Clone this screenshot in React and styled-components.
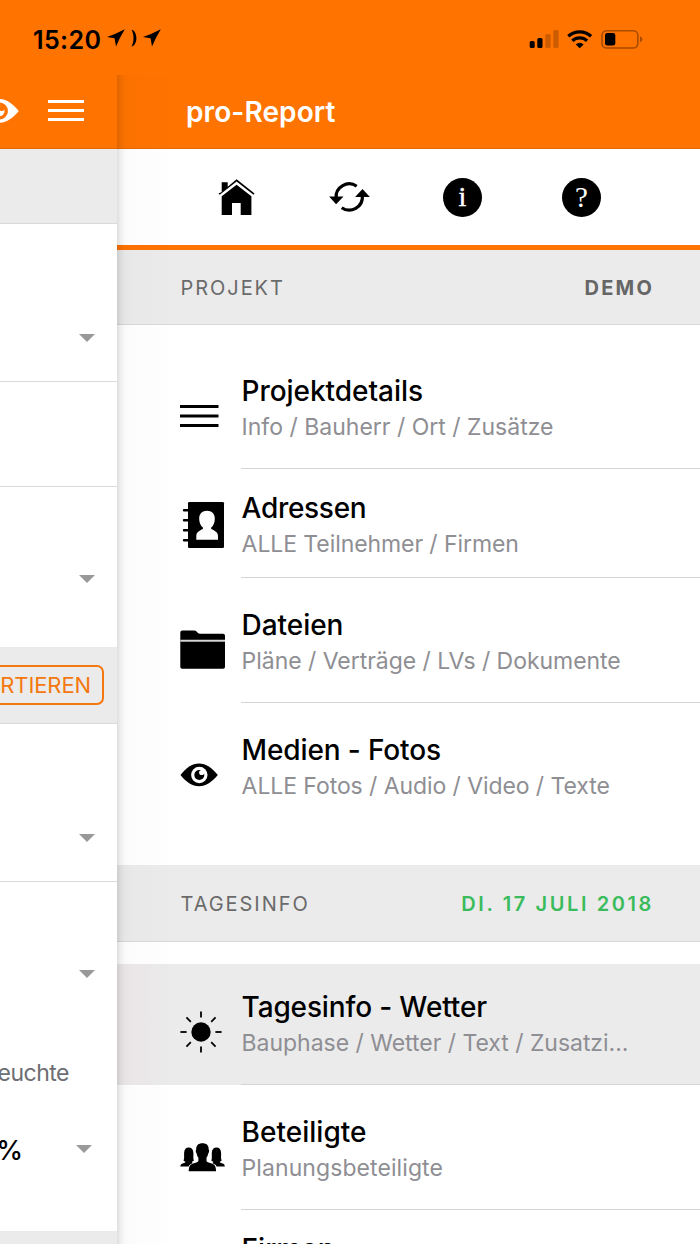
import React from "react";
import styled, { createGlobalStyle } from "styled-components";

const GlobalStyle = createGlobalStyle`
  * {
    box-sizing: border-box;
  }

  body {
    margin: 0;
    background: #fff;
    font-family: Inter, "Liberation Sans", sans-serif;
    -webkit-font-smoothing: antialiased;
  }

  svg {
    display: block;
    flex-shrink: 0;
  }
`;

const Screen = styled.div`
  width: 700px;
  height: 1244px;
  overflow: hidden;
  display: flex;
  flex-direction: column;
  background: #fff;
`;

const StatusBar = styled.header`
  display: flex;
  justify-content: space-between;
  height: 75px;
  padding: 28px 57px 0 33px;
  background: #ff7300;
`;

const StatusLeft = styled.div`
  display: flex;
  align-items: flex-start;
  gap: 6px;
  padding-top: 1px;
`;

const Clock = styled.span`
  font-size: 25px;
  font-weight: 600;
  line-height: 22px;
  letter-spacing: 0.4px;
`;

const Panes = styled.div`
  display: flex;
  flex: 1;
  min-height: 0;
`;

const PagePane = styled.main`
  width: 117px;
  overflow: hidden;
  display: flex;
  flex-direction: column;
`;

const MenuPane = styled.aside`
  position: relative;
  flex: 1;
  min-width: 0;
  overflow: hidden;
  display: flex;
  flex-direction: column;

  /* shadow the page casts on the menu */
  &::before {
    content: "";
    position: absolute;
    top: 0;
    bottom: 0;
    left: 0;
    width: 52px;
    background: linear-gradient(
      to right,
      rgba(0, 0, 0, 0.13) 0,
      rgba(0, 0, 0, 0.06) 4px,
      rgba(0, 0, 0, 0.025) 8px,
      rgba(0, 0, 0, 0.01) 13px,
      rgba(0, 0, 0, 0.005) 50px,
      transparent
    );
    z-index: 1;
  }
`;

const NavBar = styled.div`
  display: flex;
  flex-shrink: 0;
  height: 74px;
  background: #ff7300;
  border-bottom: 1px solid #e56a06;
`;

const PageNav = styled(NavBar)`
  justify-content: flex-end;
  align-items: flex-start;
  gap: 29px;
  padding: 23px 33px 0 0;
`;

const NavBars = styled.span`
  padding-top: 2px;
`;

const MenuNav = styled(NavBar)`
  padding: 20px 0 0 69px;
`;

const NavTitle = styled.h1`
  margin: 0;
  color: #fff;
  font-size: 28px;
  font-weight: 600;
  line-height: 34px;
  letter-spacing: 0.1px;
`;

const GreyBar = styled.div`
  display: flex;
  flex-shrink: 0;
  justify-content: flex-end;
  height: ${(p) => p.$height}px;
  padding: 18px 13px 0 0;
  background: #ebebeb;
  border-bottom: 1px solid #d9d9d9;
`;

const Field = styled.div`
  display: flex;
  flex-direction: column;
  flex-shrink: 0;
  align-items: flex-end;
  height: ${(p) => p.$height}px;
  padding: ${(p) => p.$top || 0}px 22px 0 0;
  border-bottom: ${(p) => (p.$last ? "none" : "1px solid #d9d9d9")};
`;

const Caret = styled.i`
  width: 0;
  height: 0;
  border-left: 8px solid transparent;
  border-right: 8px solid transparent;
  border-top: 8.5px solid #999;
`;

const FieldLabel = styled.span`
  margin: 81px 26px 0 0;
  color: #6d6d72;
  font-size: 23px;
  line-height: 28px;
  letter-spacing: -0.5px;
`;

const ValueRow = styled.div`
  display: flex;
  align-items: center;
  gap: 53px;
  margin: 44px 3px 0 0;
`;

const Value = styled.span`
  padding-top: 4px;
  font-size: 27px;
  font-weight: 500;
  line-height: 32px;
`;

const SortButton = styled.button`
  flex-shrink: 0;
  height: 40px;
  padding: 0 11px 0 30px;
  border: 2px solid #f4780f;
  border-radius: 7px;
  background: none;
  color: #f4780f;
  font-family: inherit;
  font-size: 22px;
  line-height: 36px;
  letter-spacing: -0.1px;
`;

const ToolBar = styled.nav`
  display: flex;
  flex-shrink: 0;
  align-items: flex-start;
  gap: 73px;
  height: 101px;
  padding: 29px 0 0 101px;
  border-bottom: 5px solid #ff7300;
`;

const RoundButton = styled.span`
  display: flex;
  justify-content: center;
  width: 39px;
  height: 39px;
  margin-left: ${(p) => p.$shift || 0}px;
  border-radius: 50%;
  background: #000;
  color: #fff;
  font-family: "Liberation Serif", serif;
  font-size: ${(p) => p.$size}px;
  line-height: 38px;
  -webkit-text-stroke: ${(p) => p.$stroke || 0}px #fff;
`;

const Section = styled.div`
  display: flex;
  flex-shrink: 0;
  justify-content: space-between;
  align-items: center;
  height: ${(p) => p.$height}px;
  padding: 2px 46px 0 63.5px;
  background: #ebebeb;
  border-bottom: 1px solid #d9d9d9;
  color: #6a6a6a;
  font-size: 20px;
  line-height: 24px;
  letter-spacing: 1.95px;
`;

const SectionValue = styled.b`
  color: ${(p) => p.$color || "#666"};
  font-weight: ${(p) => (p.$color ? 600 : 700)};
  letter-spacing: ${(p) => (p.$color ? 2.6 : 2.2)}px;
`;

const List = styled.ul`
  list-style: none;
  margin: 0;
  padding: ${(p) => p.$top || 0}px 0 0;
`;

const Item = styled.li`
  display: flex;
  height: ${(p) => p.$height}px;
  padding-left: 63px;
  background: ${(p) =>
    p.$active
      ? "linear-gradient(to right, #ede9ea 0, #ede9ea 22px, #ebebeb 52px)"
      : "none"};
`;

const ItemIcon = styled.span`
  width: 61px;
  padding-top: ${(p) => p.$top}px;
`;

const ItemText = styled.div`
  flex: 1;
  min-width: 0;
  padding: ${(p) => p.$top}px 60px 0 0.6px;
  border-bottom: ${(p) => (p.$line ? "1px solid #d4d4d6" : "none")};
`;

const ItemTitle = styled.div`
  font-size: 28px;
  font-weight: 500;
  line-height: 34px;
  letter-spacing: ${(p) => p.$spacing || 0}px;
  white-space: nowrap;
`;

const ItemSub = styled.div`
  margin-top: 2px;
  color: #8e8e93;
  font-size: 23px;
  line-height: 34px;
  letter-spacing: ${(p) => p.$spacing || 0}px;
  white-space: nowrap;
`;

function StatusArrow() {
  return (
    <svg width="18" height="18" viewBox="0 0 18 18">
      <path d="M0 8Q9 5 17.800.3 12.500 9 9 17.600L7.600 9.200z" />
    </svg>
  );
}

function Crescent() {
  return (
    <svg width="6" height="18" viewBox="0 0 6 18">
      <path d="M.6.8C3 .8 5.400 4.600 5.400 9.200S3 17.400.6 17.400C1.800 15 2.500 12.500 2.500 9.200S1.800 3 .6.8z" />
    </svg>
  );
}

// signal, wifi and battery share one drawing
function StatusIcons() {
  return (
    <svg width="114" height="22" viewBox="0 0 114 22">
      <rect x=".7" y="13" width="5" height="7" rx="1.500" />
      <rect x="8.300" y="10" width="5.200" height="10" rx="1.500" />
      <g fill="#cb5c00">
        <rect x="16.300" y="6" width="5.300" height="14" rx="1.500" />
        <rect x="24.300" y="2" width="5.300" height="18" rx="1.500" />
      </g>
      <g fill="none" stroke="#000" strokeWidth="3.300">
        <path d="M39.300 8.300a16.800 16.800 0 0 1 22.800 0" />
        <path d="M43.300 12.700a10.900 10.900 0 0 1 14.800 0" />
      </g>
      <path d="M50.700 20.200 46.800 16.400a5.700 5.700 0 0 1 7.800 0z" />
      <rect x="73" y="2.700" width="35.800" height="17.300" rx="4.500" fill="none" stroke="#a84c00" strokeWidth="1.600" />
      <rect x="76" y="5" width="10.300" height="12.400" rx="2.200" />
      <path d="M111 8.300q2.400 1 2.400 3t-2.400 3z" fill="#a84c00" />
    </svg>
  );
}

function Bars({ width, gap, color }) {
  return (
    <svg width={width} height={gap * 2 + 3} fill={color}>
      <rect width={width} height="3" />
      <rect y={gap} width={width} height="3" />
      <rect y={gap * 2} width={width} height="3" />
    </svg>
  );
}

function Eye({ width = 38, height = 24, color = "#000", iris = "#fff" }) {
  return (
    <svg width={width} height={height} viewBox="0 0 38 24">
      <path d="M.5 12C6 5 12 .6 19 .6S32 5 37.800 12C32 19 26 23.200 19 23.200S6 19 .5 12z" fill={color} />
      <circle cx="19.300" cy="12" r="8.200" fill={iris} />
      <circle cx="19.300" cy="12" r="5" fill={color} />
      <circle cx="21.700" cy="9.500" r="2.600" fill={iris} />
    </svg>
  );
}

function HomeIcon() {
  return (
    <svg width="37" height="38" viewBox="218 178 37 38">
      <path d="M221.700 192v-9.700h6v4.400l8.900-7.500 18 14.300-1.100 1.300-16.900-13.200-16.900 13.200-1.200-1.300z" />
      <path d="M221.700 196.200 236.600 184.700 251.400 196.200V215H240.700V203H232v12h-10.300z" />
    </svg>
  );
}

function RefreshIcon() {
  return (
    <svg width="42" height="38" viewBox="328.500 178 42 38">
      <g fill="none" stroke="#000" strokeWidth="3.200">
        <path d="M357.200 186.200A13.200 13.200 0 0 0 336.600 198" />
        <path d="M342.200 207.700A13.200 13.200 0 0 0 362.900 196" />
      </g>
      <path d="M329.600 196.600H344l-7.400 7.700zM355.600 197H370.400l-7.400-7.900z" />
    </svg>
  );
}

function AddressBookIcon() {
  return (
    <svg width="46" height="46" viewBox="0 0 46 46">
      <rect x="8" width="36" height="46" rx="1.300" />
      <path d="M4 8.300h5M4 18.300h5M4 28.300h5M4 38.300h5" stroke="#000" strokeWidth="2.400" strokeLinecap="round" />
      <path
        d="M27 8.800c4.700 0 7.800 3 7.800 7.600 0 4.200-1.300 6.900-3.600 9.200v1.300c3.500 1.600 6.800 3 6.800 7.300v3.500H16.300v-3.500c0-4.300 3.200-5.700 6.600-7.300v-1.300c-2.400-2.300-3.700-5-3.700-9.200 0-4.600 3.100-7.600 7.800-7.600z"
        fill="#fff"
      />
    </svg>
  );
}

function FolderIcon() {
  return (
    <svg width="46" height="40" viewBox="0 0 46 40">
      <path d="M.3 37V2.500Q.3.500 2.300.5H14q1.700 0 2.800 1.200Q18 3.800 20 3.800h23q2 0 2 2V37q0 1.800-1.800 1.800H2.200Q.3 38.800.3 37z" />
      <path d="M.3 10.800H45" stroke="#d5d5d5" strokeWidth="2" />
    </svg>
  );
}

function SunIcon() {
  return (
    <svg width="42" height="42" viewBox="-21 -21 42 42">
      <circle r="9.700" />
      {[0, 45, 90, 135, 180, 225, 270, 315].map((a) => (
        <path key={a} d="M0-14.400V-20.600" stroke="#000" strokeWidth="1.800" transform={`rotate(${a})`} />
      ))}
    </svg>
  );
}

function PeopleIcon() {
  const side =
    "M.3 23.400c.3-2.300 1.500-2.600 3.700-3.300q1.500-.4 1.500-1.400-1.300-.3-2-1.300c1-1.500.5-4 .6-7.400.1-3.600 2-5.400 4.600-5.400s4.600 1.800 4.700 5.400c.1 3.400-.4 5.900.5 7.400q-.7 1-2 1.300 0 1 1.500 1.600-4 1-4.700 3.100z";
  return (
    <svg width="46" height="29" viewBox="0 0 46 29">
      <path d={side} />
      <path d={side} transform="matrix(-1 0 0 1 45.200 0)" />
      <path
        d="M22.500.2c4 0 6.300 2 6.200 6.300.7.500.6 2.700-.4 3.900-.4 2-1.100 3.300-1.800 4.100v3.200c0 1.200 2 1.800 4.500 2.600 3.500 1.200 4.900 2.300 5.100 8H8.700c.2-5.700 1.600-6.800 5.200-8 2.500-.8 4.500-1.400 4.500-2.600v-3.200c-.8-.8-1.400-2.100-1.800-4.100-1-1.200-1.100-3.400-.4-3.900C16 2.200 18.500.2 22.500.2z"
        stroke="#fff"
        strokeWidth="1"
        paintOrder="stroke"
      />
    </svg>
  );
}

const projectItems = [
  {
    title: "Projektdetails",
    sub: "Info / Bauherr / Ort / Zusätze",
    icon: <Bars width={38.5} gap={9.5} />,
    height: 144,
    iconTop: 80,
    textTop: 49,
    spacing: -0.05,
  },
  {
    title: "Adressen",
    sub: "ALLE Teilnehmer / Firmen",
    icon: <AddressBookIcon />,
    height: 109,
    iconTop: 33,
    textTop: 22,
    spacing: -0.3,
    subSpacing: -0.08,
  },
  {
    title: "Dateien",
    sub: "Pläne / Verträge / LVs / Dokumente",
    icon: <FolderIcon />,
    height: 125,
    iconTop: 52,
    textTop: 30,
    spacing: -0.05,
    subSpacing: -0.04,
  },
  {
    title: "Medien - Fotos",
    sub: "ALLE Fotos / Audio / Video / Texte",
    icon: <Eye />,
    height: 162,
    iconTop: 60,
    textTop: 30,
    spacing: -0.13,
    subSpacing: -0.08,
    noLine: true,
  },
];

const dayItems = [
  {
    title: "Tagesinfo - Wetter",
    sub: "Bauphase / Wetter / Text / Zusatzi...",
    icon: <SunIcon />,
    height: 121,
    iconTop: 47,
    textTop: 26,
    spacing: -0.15,
    subSpacing: -0.03,
    active: true,
  },
  {
    title: "Beteiligte",
    sub: "Planungsbeteiligte",
    icon: <PeopleIcon />,
    height: 125,
    iconTop: 58,
    textTop: 30,
    spacing: 0.02,
    subSpacing: 0.08,
  },
  { title: "Firmen", height: 125, iconTop: 58, textTop: 22 },
];

function MenuItem({ item }) {
  return (
    <Item $height={item.height} $active={item.active}>
      <ItemIcon $top={item.iconTop}>{item.icon}</ItemIcon>
      <ItemText $top={item.textTop} $line={!item.noLine}>
        <ItemTitle $spacing={item.spacing}>{item.title}</ItemTitle>
        {item.sub && <ItemSub $spacing={item.subSpacing}>{item.sub}</ItemSub>}
      </ItemText>
    </Item>
  );
}

function Page() {
  return (
    <PagePane>
      <PageNav>
        <Eye width={40} height={26} color="#fff" iris="#ff7300" />
        <NavBars>
          <Bars width={36} gap={9} color="#fff" />
        </NavBars>
      </PageNav>
      <GreyBar $height={75} />
      <Field $height={158} $top={110}>
        <Caret />
      </Field>
      <Field $height={105} />
      <Field $height={160} $top={88} $last>
        <Caret />
      </Field>
      <GreyBar $height={77}>
        <SortButton>RTIEREN</SortButton>
      </GreyBar>
      <Field $height={158} $top={110}>
        <Caret />
      </Field>
      <Field $height={349} $top={88} $last>
        <Caret />
        <FieldLabel>euchte</FieldLabel>
        <ValueRow>
          <Value>%</Value>
          <Caret />
        </ValueRow>
      </Field>
      <GreyBar $height={75} />
    </PagePane>
  );
}

function Menu() {
  return (
    <MenuPane>
      <MenuNav>
        <NavTitle>pro-Report</NavTitle>
      </MenuNav>
      <ToolBar>
        <HomeIcon />
        <RefreshIcon />
        <RoundButton $size={28} $stroke={0.5}>
          i
        </RoundButton>
        <RoundButton $size={29} $shift={7}>
          ?
        </RoundButton>
      </ToolBar>
      <Section $height={75}>
        <span>PROJEKT</span>
        <SectionValue>DEMO</SectionValue>
      </Section>
      <List>
        {projectItems.map((item) => (
          <MenuItem key={item.title} item={item} />
        ))}
      </List>
      <Section $height={77}>
        <span>TAGESINFO</span>
        <SectionValue $color="#3abb5c">DI. 17 JULI 2018</SectionValue>
      </Section>
      <List $top={22}>
        {dayItems.map((item) => (
          <MenuItem key={item.title} item={item} />
        ))}
      </List>
    </MenuPane>
  );
}

function App() {
  return (
    <Screen>
      <GlobalStyle />
      <StatusBar>
        <StatusLeft>
          <Clock>15:20</Clock>
          <StatusArrow />
          <Crescent />
          <StatusArrow />
        </StatusLeft>
        <StatusIcons />
      </StatusBar>
      <Panes>
        <Page />
        <Menu />
      </Panes>
    </Screen>
  );
}

export default App;
